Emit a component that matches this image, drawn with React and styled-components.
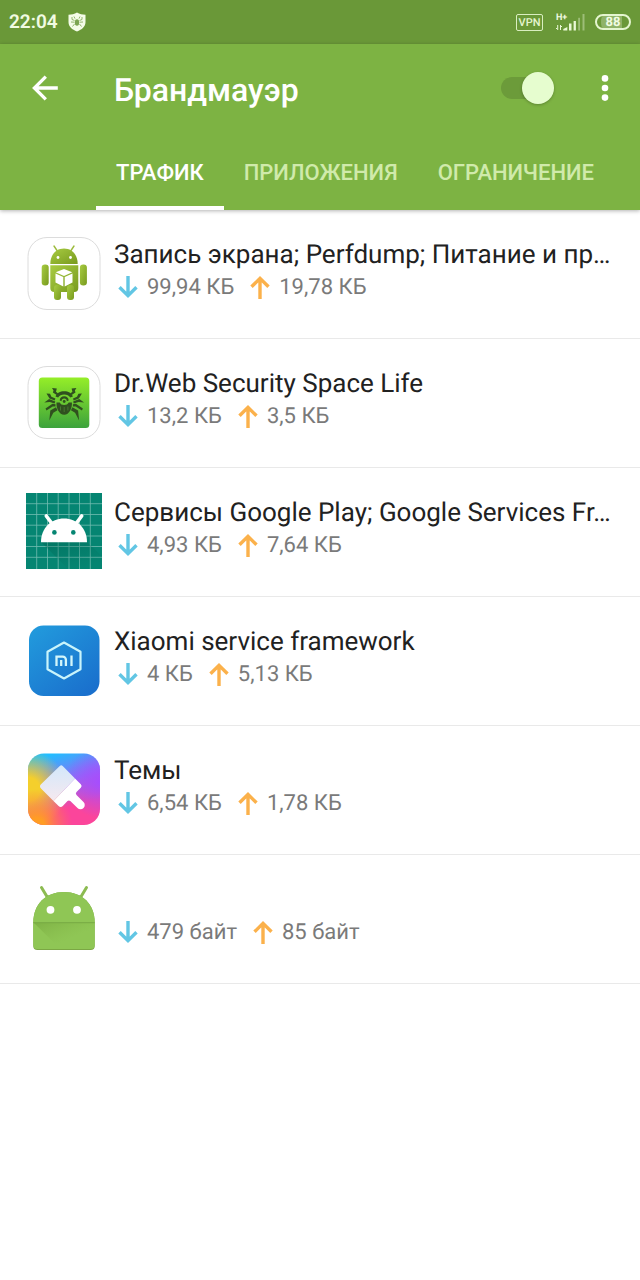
import React, { useState } from 'react';
import styled, { createGlobalStyle } from 'styled-components';

const GlobalStyle = createGlobalStyle`
  * {
    box-sizing: border-box;
  }
  body {
    margin: 0;
    background: #fff;
    font-family: Roboto, 'Noto Sans', sans-serif;
    text-rendering: geometricPrecision;
  }
  button {
    padding: 0;
    border: none;
    background: none;
    color: inherit;
    font: inherit;
    cursor: pointer;
  }
  svg {
    display: block;
  }
`;

// --- Styled Components ---

const Page = styled.div`
  min-height: 100vh;
  background: #fff;
`;

const StatusBar = styled.div`
  display: flex;
  align-items: center;
  justify-content: space-between;
  height: 44px;
  padding: 0 9px;
  background: #6a9838;
  color: #f1fbe2;
`;

const StatusGroup = styled.div`
  display: flex;
  align-items: center;
  gap: ${({ $gap }) => $gap}px;
`;

const Clock = styled.span`
  font-size: 19px;
  line-height: 24px;
  font-weight: 600;
`;

const VpnBadge = styled.span`
  width: 27px;
  height: 17px;
  margin-right: 3px;
  border: 1px solid #d9eec0;
  border-radius: 2px;
  color: #e4f5cf;
  font-size: 11px;
  line-height: 16px;
  font-weight: 500;
  text-align: center;
`;

// network type sits in the corner above the short bars
const Signal = styled.span`
  display: grid;
  width: 29px;
  font-size: 9px;
  line-height: 8px;
  font-weight: 700;

  > * {
    grid-area: 1 / 1;
  }
`;

const Battery = styled.span`
  width: 36px;
  height: 16px;
  border: 2px solid #e4f5cf;
  border-radius: 8px;
  background: linear-gradient(90deg, #8fb368 86%, #6a9838 86%) content-box;
  padding: 0 4px;
  font-size: 13px;
  line-height: 13px;
  font-weight: 700;
  text-align: center;
`;

const Header = styled.header`
  background: #7db343;
  color: #fff;
  box-shadow: 0 1px 4px rgba(0, 0, 0, 0.3);
`;

const Toolbar = styled.div`
  display: flex;
  align-items: center;
  height: 88px;
  padding: 0 15px 0 21px;
`;

const IconButton = styled.button`
  display: flex;
  align-items: center;
  justify-content: center;
  width: ${({ $width }) => $width}px;
  height: 48px;
`;

const Title = styled.h1`
  flex: 1;
  margin: 0 0 0 45px;
  padding-top: 4px;
  font-size: 32px;
  line-height: 40px;
  font-weight: 500;
`;

const Switch = styled.input`
  appearance: none;
  display: flex;
  align-items: center;
  width: 53px;
  height: 32px;
  margin: 0 31px 0 0;
  cursor: pointer;

  /* the track is lower than the thumb, so it gets its own box */
  &::before {
    content: '';
    flex: none;
    width: 46px;
    height: 22px;
    border-radius: 11px;
    background: #6c9b3a;
  }
  &::after {
    content: '';
    flex: none;
    width: 32px;
    height: 32px;
    margin-left: ${({ checked }) => (checked ? '-25px' : '-46px')};
    border-radius: 50%;
    background: #e6fdcf;
    box-shadow: 0 1px 3px rgba(0, 0, 0, 0.25);
  }
`;

const Tabs = styled.div`
  display: flex;
  height: 78px;
  padding-left: 96px;
`;

const Tab = styled.button`
  && {
    padding: 8px 20px 0;
    border-bottom: 4px solid ${({ $active }) => ($active ? '#fff' : 'transparent')};
    color: ${({ $active }) => ($active ? '#fff' : '#d0eaab')};
    font-size: 22px;
    line-height: 28px;
    font-weight: 500;
    white-space: nowrap;
  }
`;

const AppList = styled.ul`
  margin: 0;
  padding: 0;
  list-style: none;
`;

const AppRow = styled.li`
  display: flex;
  align-items: flex-start;
  gap: 12px;
  padding: 25px 20px 27px 26px;
  border-bottom: 1px solid #e9e9e9;
`;

const AppIcon = styled.svg`
  flex: none;
  width: 76px;
  height: 76px;
`;

const AppInfo = styled.div`
  flex: 1;
  min-width: 0;
  padding-top: 4px;
`;

const AppName = styled.div`
  min-height: 32px;
  overflow: hidden;
  color: #212121;
  font-size: 26px;
  line-height: 32px;
  text-overflow: ellipsis;
  white-space: nowrap;
`;

const Traffic = styled.div`
  display: flex;
  gap: 12px;
  color: #7a7a7a;
  font-size: 22px;
  line-height: 34px;
`;

const Amount = styled.span`
  display: flex;
  align-items: center;
  gap: 5px;
`;

// --- Small icons ---

function Shield() {
  return (
    <svg width="18" height="20" viewBox="0 0 18 20" fill="none">
      <path d="M9 .6C6.400 2.200 3.600 2.700.5 2.800V10c0 4.600 3.600 7.700 8.500 9.400 4.900-1.700 8.500-4.800 8.500-9.400V2.800C14.400 2.700 11.600 2.200 9 .6Z" fill="#f4fce8" />
      <ellipse cx="9" cy="10.500" rx="2.200" ry="3.200" fill="#7ba451" />
      <path d="M6.500 8.500 4 7.500V5M11.500 8.500 14 7.500V5M6.300 10.200 3 10M11.700 10.200 15 10M6.500 12 4.500 14.500M11.500 12l2 2.500M7 6.600 6 4.500M11 6.600l1-2.100" stroke="#7ba451" strokeWidth=".8" />
    </svg>
  );
}

function SignalBars() {
  return (
    <svg width="29" height="17" viewBox="0 0 29 17" fill="#eaf8d6">
      <path d="M1.200 11h1v5h-1zM0 14h1v1H0zM4 11h1v5H4zM5 12h1v1H5z" />
      <path d="M7.300 16.500V15l4-2v3.500z" />
      <rect x="13" y="9.500" width="2.500" height="7" />
      <rect x="17.600" y="7" width="2.300" height="9.500" />
      <rect x="22.200" y="3.800" width="1.800" height="12.700" opacity=".4" />
      <rect x="26.500" y="0" width="2" height="16.500" opacity=".4" />
    </svg>
  );
}

function BackArrow() {
  return (
    <svg width="28" height="28" viewBox="0 0 28 28" fill="none" stroke="#fff" strokeWidth="3.300">
      <path d="M26.800 14H3.500M14.800 2.600 3.400 14l11.400 11.400" />
    </svg>
  );
}

function Dots() {
  return (
    <svg width="8" height="28" viewBox="0 0 8 28" fill="#fff">
      <circle cx="4" cy="4.400" r="3.300" />
      <circle cx="4" cy="14" r="3.300" />
      <circle cx="4" cy="23.600" r="3.300" />
    </svg>
  );
}

function Arrow({ up }) {
  return (
    <svg width="28" height="26" viewBox="0 1 28 26" fill="none" stroke={up ? '#fbb14b' : '#62c6e4'} strokeWidth="3.400">
      <path d={up ? 'M14 25V4M5.500 12.800 14 4.300l8.500 8.500' : 'M14 2v20M5.500 13.200 14 21.700l8.500-8.500'} />
    </svg>
  );
}

// --- App icons ---

function RobotIcon() {
  return (
    <AppIcon viewBox="0 0 76 76" aria-hidden="true">
      <defs>
        <linearGradient id="robot" x1="0" y1="0" x2="1" y2="1">
          <stop offset="0" stopColor="#a8cc42" />
          <stop offset="1" stopColor="#789a1e" />
        </linearGradient>
      </defs>
      <rect x="2" y="2.500" width="72" height="72" rx="19" fill="#fff" stroke="#dcdcdc" />
      <path d="M28 11l4 6M48 11l-4 6" stroke="#9dbb3d" strokeWidth="1.400" strokeLinecap="round" />
      <g fill="url(#robot)">
        <path d="M24.300 29c0-9.500 6-15.500 13.700-15.500S51.700 19.500 51.700 29z" />
        <path d="M24.300 30.200h28V53a4 4 0 0 1-4 4h-20a4 4 0 0 1-4-4z" />
        <rect x="15.700" y="29.500" width="7" height="21" rx="3.300" />
        <rect x="53.900" y="29.500" width="7" height="21" rx="3.300" />
        <rect x="28" y="50" width="7" height="15" rx="3" />
        <rect x="41" y="50" width="7" height="15" rx="3" />
      </g>
      <circle cx="32" cy="22.500" r="1.400" fill="#fff" />
      <circle cx="44.500" cy="22.500" r="1.400" fill="#fff" />
      <path d="M38 34l8.300 3.200L38 41l-8.300-3.800zM29.500 38.500l7.800 3.600v9.400l-7.800-4zM46.500 38.500l-7.800 3.600v9.400l7.800-4z" fill="#fff" />
    </AppIcon>
  );
}

function SpiderIcon() {
  return (
    <AppIcon viewBox="0 0 76 76" aria-hidden="true">
      <defs>
        <linearGradient id="web" x1="0" y1="0" x2="0" y2="1">
          <stop offset="0" stopColor="#95ee28" />
          <stop offset="1" stopColor="#3ca23c" />
        </linearGradient>
        <path id="legs" d="M26 24l4.800.4-.8 3.400 2.200 1.700-1.500 1.500-3.800-2.400.6-2.100zM20.500 29.500l3.500.3 1.400 3 4 1.600-.7 2-5.200-1.900zM18.300 38.500l4.800-3.500 6.200 2.400-.7 2-4.800-1.300zM29.500 40.200l-3-.4-7 4.800 1 2 6.200-4 2.800-.2zM30 43.300l-5.700 3.100-1 10 4-7.700 4.200-2.500z" />
      </defs>
      <rect x="2" y="2.500" width="72" height="72" rx="19" fill="#fff" stroke="#dcdcdc" />
      <rect x="12.800" y="13.500" width="50.500" height="50.500" rx="3.500" fill="url(#web)" />
      <g fill="#30501f">
        <path d="M29.500 32.500c1.500-3.800 4.500-5.300 8.700-5.300s7.200 1.500 8.700 5.300l-2.600 1c-1.400-2-3.300-3-6.100-3s-4.700 1-6.100 3z" />
        <path d="M30.500 38.500h3.200c.8 1.700 2.300 2.500 4.500 2.500s3.700-.8 4.500-2.500h3.200c.5 5.500-2.700 12.300-7.700 12.300s-8.200-6.800-7.700-12.300z" />
        <path d="M33.700 36.500c0-2.700 1.800-4.300 4.500-4.300s4.500 1.600 4.500 4.300l-1.900.8c0-2-1-2.900-2.600-2.900s-2.600.9-2.600 2.900z" />
        <circle cx="38.200" cy="37.500" r="1.400" />
        <use href="#legs" />
        <use href="#legs" transform="translate(76.400 0) scale(-1 1)" />
      </g>
      <path d="M34.500 42.500v4M38.200 43v5M41.900 42.500v4" stroke="#4f8738" strokeWidth=".7" />
    </AppIcon>
  );
}

const gridLines = [10.700, 21.500, 32.200, 43, 53.500, 64.300];

function ServicesIcon() {
  return (
    <AppIcon viewBox="0 0 76 76" aria-hidden="true">
      <defs>
        <linearGradient id="fall" x1="0" y1="0" x2=".6" y2="1">
          <stop offset="0" stopColor="#00614f" stopOpacity=".7" />
          <stop offset="1" stopColor="#00614f" stopOpacity="0" />
        </linearGradient>
      </defs>
      <rect width="76" height="76" fill="#058572" />
      {gridLines.map((n) => (
        <path key={n} d={`M${n} 0v76M0 ${n}h76`} stroke="#71bdb1" strokeWidth=".8" />
      ))}
      <path d="M15 49h46l15 14v13H42z" fill="url(#fall)" opacity=".6" />
      <path d="M15 49.200C15 35 25 25.500 38 25.500S61 35 61 49.200z" fill="#fff" />
      <path d="M20.300 23l6 8M55.700 23l-6 8" stroke="#fff" strokeWidth="3.600" strokeLinecap="round" />
      <circle cx="28.400" cy="39.400" r="2.300" fill="#058572" />
      <circle cx="47.300" cy="39.400" r="2.300" fill="#058572" />
    </AppIcon>
  );
}

function MiIcon() {
  return (
    <AppIcon viewBox="0 0 76 76" aria-hidden="true">
      <defs>
        <linearGradient id="mi" x1="0" y1="0" x2=".8" y2="1">
          <stop offset="0" stopColor="#229cdd" />
          <stop offset="1" stopColor="#1a70cd" />
        </linearGradient>
      </defs>
      <rect x="3" y="3.500" width="70.500" height="70.500" rx="14.500" fill="url(#mi)" />
      <path d="M38 20.500l16.500 9.200v17.600L38 56.500l-16.500-9.200V29.700z" fill="none" stroke="#c9f4fb" strokeWidth="2.200" strokeLinejoin="round" />
      <path d="M30.500 44v-9.400h6.200a3.200 3.200 0 0 1 3.200 3.200V44M35.200 44v-6M45.500 44V33.500" fill="none" stroke="#d3f6fb" strokeWidth="2.300" />
    </AppIcon>
  );
}

function ThemesIcon() {
  return (
    <AppIcon viewBox="0 0 76 76" aria-hidden="true">
      <defs>
        <linearGradient id="side" x1="0" y1="0" x2=".3" y2="1">
          <stop offset=".1" stopColor="#22bdff" />
          <stop offset=".5" stopColor="#8e6cf5" />
          <stop offset=".85" stopColor="#fb459b" />
        </linearGradient>
        <radialGradient id="warm" cx="0" cy=".5" r=".55">
          <stop offset=".3" stopColor="#f4cf2c" />
          <stop offset="1" stopColor="#f4cf2c" stopOpacity="0" />
        </radialGradient>
        <radialGradient id="orange" cx=".12" cy="1" r=".5">
          <stop offset=".2" stopColor="#ff9d24" />
          <stop offset="1" stopColor="#ff7152" stopOpacity="0" />
        </radialGradient>
        <radialGradient id="violet" cx="1" cy=".4" r=".5">
          <stop offset="0" stopColor="#a54dff" />
          <stop offset="1" stopColor="#a54dff" stopOpacity="0" />
        </radialGradient>
        <linearGradient id="bristle" x1="0" y1="0" x2="0" y2="1">
          <stop offset="0" stopColor="#d3e8fb" />
          <stop offset="1" stopColor="#f6e9ef" />
        </linearGradient>
      </defs>
      {['side', 'violet', 'warm', 'orange'].map((id) => (
        <rect key={id} x="2" y="2.500" width="72" height="71.500" rx="16" fill={`url(#${id})`} />
      ))}
      <path d="M49 27.500l5.800 5.700a2.500 2.500 0 0 1 0 3.500l-4.300 4.400a2 2 0 0 0 0 2.800l7 7.200a4.200 4.200 0 0 1-6 6l-7.200-7a2 2 0 0 0-2.800 0l-4.700 4.800a3 3 0 0 1-4.200 0L27.500 50z" fill="#fff" />
      <path d="M49 27.500L36.700 14.900a2 2 0 0 0-2.900 0L15 33.300a3 3 0 0 0 0 4.200L27.500 50z" fill="url(#bristle)" />
    </AppIcon>
  );
}

function DefaultIcon() {
  return (
    <AppIcon viewBox="0 0 76 76" aria-hidden="true">
      <defs>
        <linearGradient id="fold" x1="0" y1="0" x2="1" y2="1">
          <stop offset="0" stopColor="#6d9d35" stopOpacity=".5" />
          <stop offset=".6" stopColor="#7fb141" stopOpacity="0" />
        </linearGradient>
      </defs>
      <path d="M15.500 7.500l6 10M60.500 7.500l-6 10" stroke="#8cbb51" strokeWidth="3" strokeLinecap="round" />
      <path d="M7.300 42.500C7.300 24 20 12 38 12s30.700 12 30.700 30.500V66a4 4 0 0 1-4 4H11.300a4 4 0 0 1-4-4z" fill="#7ba744" />
      <path d="M7.300 42.500C7.300 24 20 12 38 12s30.700 12 30.700 30.500V65a4 4 0 0 1-4 4H11.300a4 4 0 0 1-4-4z" fill="#8fc655" />
      <path d="M8 43l26.500 26H64.700a4 4 0 0 0 4-4V43z" fill="url(#fold)" />
      <path d="M7.300 42.700h61.400" stroke="#77a943" strokeWidth="1" />
      <circle cx="24.500" cy="29.800" r="3.900" fill="#fff" />
      <circle cx="51" cy="29.800" r="3.900" fill="#fff" />
    </AppIcon>
  );
}

const apps = [
  { id: 1, icon: RobotIcon, name: 'Запись экрана; Perfdump; Питание и пр…', down: '99,94 КБ', up: '19,78 КБ' },
  { id: 2, icon: SpiderIcon, name: 'Dr.Web Security Space Life', down: '13,2 КБ', up: '3,5 КБ' },
  { id: 3, icon: ServicesIcon, name: 'Сервисы Google Play; Google Services Fr…', down: '4,93 КБ', up: '7,64 КБ' },
  { id: 4, icon: MiIcon, name: 'Xiaomi service framework', down: '4 КБ', up: '5,13 КБ' },
  { id: 5, icon: ThemesIcon, name: 'Темы', down: '6,54 КБ', up: '1,78 КБ' },
  { id: 6, icon: DefaultIcon, name: '', down: '479 байт', up: '85 байт' },
];

const tabs = ['ТРАФИК', 'ПРИЛОЖЕНИЯ', 'ОГРАНИЧЕНИЕ'];

// --- Main Component ---
function App() {
  const [activeTab, setActiveTab] = useState('ТРАФИК');
  const [enabled, setEnabled] = useState(true);

  return (
    <Page>
      <GlobalStyle />
      <StatusBar>
        <StatusGroup $gap={10}>
          <Clock>22:04</Clock>
          <Shield />
        </StatusGroup>
        <StatusGroup $gap={10}>
          <VpnBadge>VPN</VpnBadge>
          <Signal>
            <span>H+</span>
            <SignalBars />
          </Signal>
          <Battery>88</Battery>
        </StatusGroup>
      </StatusBar>
      <Header>
        <Toolbar>
          <IconButton $width={48} aria-label="Назад">
            <BackArrow />
          </IconButton>
          <Title>Брандмауэр</Title>
          <Switch
            type="checkbox"
            aria-label="Брандмауэр"
            checked={enabled}
            onChange={(e) => setEnabled(e.target.checked)}
          />
          <IconButton $width={40} aria-label="Меню">
            <Dots />
          </IconButton>
        </Toolbar>
        <Tabs role="tablist">
          {tabs.map((tab) => (
            <Tab
              key={tab}
              role="tab"
              aria-selected={activeTab === tab}
              $active={activeTab === tab}
              onClick={() => setActiveTab(tab)}
            >
              {tab}
            </Tab>
          ))}
        </Tabs>
      </Header>
      <AppList>
        {apps.map(({ id, icon: Icon, name, down, up }) => (
          <AppRow key={id}>
            <Icon />
            <AppInfo>
              <AppName>{name}</AppName>
              <Traffic>
                <Amount>
                  <Arrow />
                  {down}
                </Amount>
                <Amount>
                  <Arrow up />
                  {up}
                </Amount>
              </Traffic>
            </AppInfo>
          </AppRow>
        ))}
      </AppList>
    </Page>
  );
}

export default App;
